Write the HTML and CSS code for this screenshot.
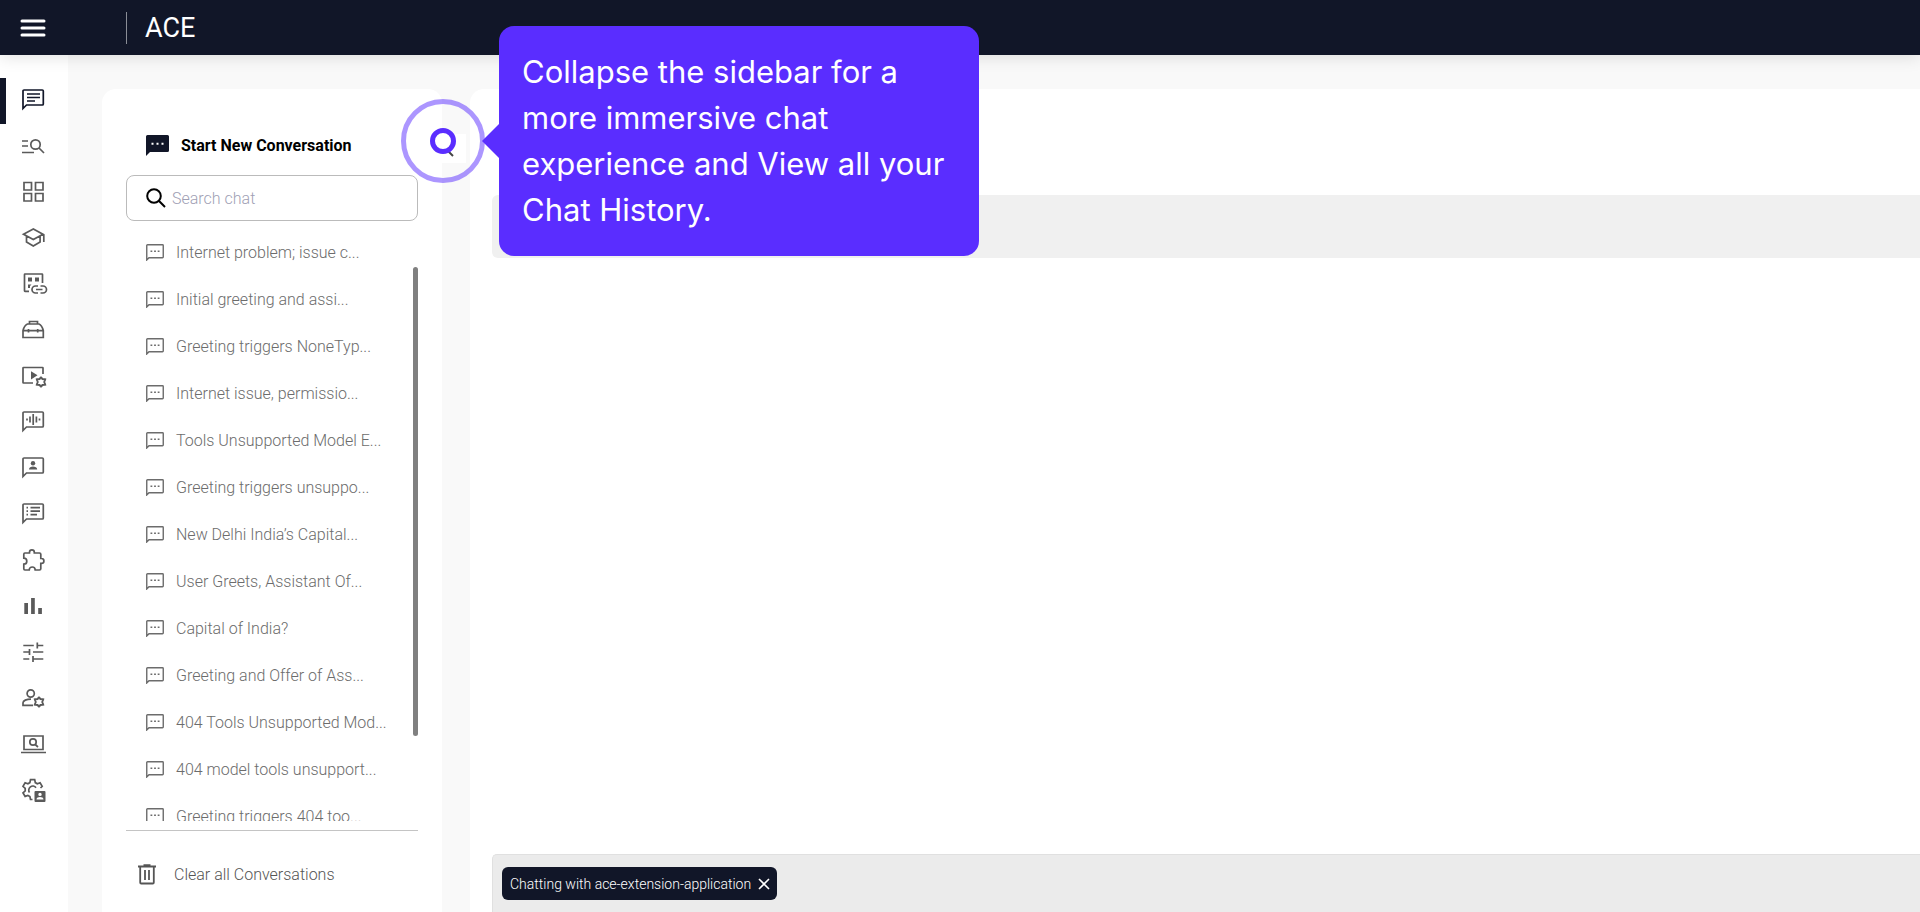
FILE: index.html
```html
<!DOCTYPE html>
<html lang="en">
<head>
    <meta charset="UTF-8">
    <meta name="viewport" content="width=device-width, initial-scale=1.0">
    <title>ACE</title>
    <link rel="stylesheet" href="styles.css">
</head>
<body>

<!-- shared icon shapes -->
<svg class="sprite" aria-hidden="true">
    <symbol id="bubble" viewBox="0 0 24 24">
        <path d="M2 20.5V3a1 1 0 0 1 1-1h18.300a1 1 0 0 1 1 1v13a1 1 0 0 1-1 1H5.500z"/>
    </symbol>
    <symbol id="gear" viewBox="0 0 24 24">
        <path d="M12 1l3 4.500 6.500.5-2.500 6 2.500 6-6.500.5-3 4.500-3-4.500-6.500-.5L5 12 2.500 6l6.500-.5z"/>
    </symbol>
    <symbol id="message" viewBox="0 0 18 17">
        <path d="M.75 16V1.500a.75.75 0 0 1 .75-.75h15a.75.75 0 0 1 .75.75v11.500a.75.75 0 0 1-.75.75H3z"/>
        <path d="M4.500 7.200h1.800M8.100 7.200h1.800M11.700 7.200h1.800"/>
    </symbol>
</svg>

<header class="topbar">
    <button class="menu-btn" aria-label="Menu">
        <svg width="26" height="18" viewBox="0 0 26 18"><path d="M2 2h22M2 9h22M2 16h22"/></svg>
    </button>
    <span class="topbar-divider"></span>
    <h1>ACE</h1>
</header>

<div class="layout">
    <nav class="rail" aria-label="Main">
        <a href="#" class="active" aria-label="Chat"><svg class="icon"><use href="#bubble"/><path d="M6 6h13M6 9.500h13M6 13h8"/></svg></a>
        <a href="#" aria-label="Search logs"><svg class="icon"><path d="M1 7h6M1 12h6M1 18.500h12M18 14l5 5"/><circle cx="14.500" cy="10.500" r="4.700"/></svg></a>
        <a href="#" aria-label="Dashboard"><svg class="icon"><path d="M3 2.500h7.500v7.500H3zM14.500 2.500H22v7.500h-7.500zM3 13.500h7.500V21H3zM14.500 13.500H22V21h-7.500z"/></svg></a>
        <a href="#" aria-label="Learning"><svg class="icon"><path d="M12.300 3L2.500 8.200l9.800 5.300L22 8.200zM5.500 10v6l6.800 4 6.800-4v-6M22.800 8.200V16"/></svg></a>
        <a href="#" aria-label="Integrations"><svg class="icon"><path d="M8 19.300H4a.5.5 0 0 1-.5-.5V2.500A.5.5 0 0 1 4 2h17a.5.5 0 0 1 .5.5V11"/><path class="solid" d="M7 5.500h4v4H7zM14 5.500h4v4h-4zM7 12.500h3.500L9 14v2H7z"/><path d="M17 14h-2.500a3.500 3.500 0 0 0 0 7H17M19.500 14H22a3.500 3.500 0 0 1 0 7h-2.500M15 17.500h6.500"/></svg></a>
        <a href="#" aria-label="Tools"><svg class="icon"><path d="M8.500 6V3.500h8V6M6.500 6h11.500c2.500 1 3.500 3.500 4.300 6.500v7H2v-7C2.800 9.500 4 7 6.500 6zM2 12.700h20.300M7.500 11v3.500M16.700 11v3.500"/></svg></a>
        <a href="#" aria-label="Video settings"><svg class="icon"><path d="M12 19H2.500A.5.5 0 0 1 2 18.500V4a.5.5 0 0 1 .5-.5h19a.5.5 0 0 1 .5.500V10"/><path class="solid" d="M10 7.200v8.300l6.500-4.200z"/><use class="small-gear" href="#gear" x="14.500" y="12.500" width="11" height="11"/></svg></a>
        <a href="#" aria-label="Voice chat"><svg class="icon"><use href="#bubble"/><path d="M6 8.500v2M9 6.500v6M12.200 4v11M15.400 6.500v6M18.500 8.500v2"/></svg></a>
        <a href="#" aria-label="Personas"><svg class="icon"><use href="#bubble"/><circle class="solid" cx="12" cy="7.300" r="2.200"/><path class="solid" d="M8 13.500c0-2.200 2-3 4-3s4.200.8 4.200 3z"/></svg></a>
        <a href="#" aria-label="Prompts"><svg class="icon"><use href="#bubble"/><path d="M5.500 5.700h1.500M9.500 5.700H19M5.500 9.200h1.500M9.500 9.200H19M5.500 12.700h1.500M9.500 12.700H16"/></svg></a>
        <a href="#" aria-label="Extensions"><svg class="icon"><path d="M4 5h4.500V4.200a2.400 2.400 0 0 1 4.800 0V5h5.200a1.300 1.300 0 0 1 1.300 1.300v4.200h.7a2.400 2.400 0 0 1 0 4.800h-.7v5.400a1.300 1.300 0 0 1-1.300 1.300h-4.300c0-1.800-1.400-3-3-3s-3 1.200-3 3H4A1.300 1.300 0 0 1 2.800 20.700V16.200c1.700 0 3-1.400 3-3s-1.300-3-3-3V6.300A1.300 1.300 0 0 1 4 5z"/></svg></a>
        <a href="#" aria-label="Analytics"><svg class="icon"><path class="solid" d="M3.300 9h3.700v11H3.300zM10.100 4h3.700v16h-3.700zM17.200 14h3.700v6h-3.700z"/></svg></a>
        <a href="#" aria-label="Tuning"><svg class="icon"><path d="M2.300 5.500h10.500M16.300 2.500v6M16.300 5.500h6M2.300 12h6M8.500 9v6M12 12h10.300M2.300 19h6M12 16v6M12 19h10.300"/></svg></a>
        <a href="#" aria-label="Accounts"><svg class="icon"><circle cx="9.700" cy="7.500" r="3.600"/><path d="M12 19.300H2v-2.500c0-2.200 3.500-3.700 8-3.700"/><use class="small-gear" href="#gear" x="12.500" y="10.500" width="11" height="11"/></svg></a>
        <a href="#" aria-label="Monitoring"><svg class="icon"><path d="M3 4h19v13.500H3zM0 20.500h25M14.200 12.500l2.800 2.500"/><circle cx="12" cy="10" r="3.200"/></svg></a>
        <a href="#" aria-label="Admin settings"><svg class="icon"><path d="M11.500 21.500h-2l-.6-3-2-1.100-2.800 1-2.100-3.600 2.200-2v-2.400l-2.200-2L4.100 4.800l2.800 1 2-1.200.6-3h4.200l.6 3 2 1.200 2.800-1L21.200 8.400 19.500 10"/><path d="M8.500 14.500a4 4 0 0 1 6.500-4.700"/><path class="solid" fill-rule="evenodd" d="M14.500 13h9a1 1 0 0 1 1 1v9a1 1 0 0 1-1 1h-9a1 1 0 0 1-1-1v-9a1 1 0 0 1 1-1zM19 14.700a1.700 1.700 0 1 0 0 3.400 1.700 1.700 0 0 0 0-3.400zM15.500 21.500h7c0-1.800-1.800-2.500-3.500-2.500s-3.500.7-3.500 2.500z"/></svg></a>
    </nav>

    <aside class="history">
        <button class="new-chat">
            <svg width="23" height="21" viewBox="0 0 23 21"><path d="M0 21V1.500A1.500 1.500 0 0 1 1.500 0h20A1.500 1.500 0 0 1 23 1.500v14a1.500 1.500 0 0 1-1.500 1.500H4z"/><path class="dots" d="M5.500 8.700h2M10.500 8.700h2M15.500 8.700h2"/></svg>
            Start New Conversation
        </button>

        <label class="search">
            <svg width="20" height="20" viewBox="0 0 20 20"><circle cx="8" cy="8" r="6.800"/><path d="M12.800 12.800l6.200 6.200"/></svg>
            <input type="search" placeholder="Search chat" aria-label="Search chat">
        </label>

        <div class="history-list">
            <ul id="conversations"></ul>
            <div class="scroll-track"><div class="scroll-thumb"></div></div>
        </div>

        <button class="clear-all">
            <svg width="18" height="21" viewBox="0 0 18 21"><path d="M0 2.500h18M5.500 1.200h7M2.200 2.500v16a1 1 0 0 0 1 1h11.600a1 1 0 0 0 1-1v-16M7 6v10M11 6v10"/></svg>
            Clear all Conversations
        </button>

        <button class="collapse-btn" aria-label="Collapse sidebar">
            <svg width="12" height="12" viewBox="0 0 12 12"><path d="M1 1l8 8"/></svg>
        </button>
    </aside>

    <main class="chat">
        <div class="chat-banner"></div>
        <div class="composer">
            <div class="chip">
                Chatting with ace-extension-application
                <button aria-label="Close"><svg width="12" height="12" viewBox="0 0 12 12"><path d="M1 1l10 10M11 1L1 11"/></svg></button>
            </div>
        </div>
    </main>
</div>

<!-- guided tour step -->
<div class="tour-marker"><span></span></div>
<div class="tour-tip" role="tooltip">Collapse the sidebar for a more immersive chat experience and View all your Chat History.</div>

<script>
    const conversations = [
        "Internet problem; issue c...",
        "Initial greeting and assi...",
        "Greeting triggers NoneTyp...",
        "Internet issue, permissio...",
        "Tools Unsupported Model E...",
        "Greeting triggers unsuppo...",
        "New Delhi India’s Capital...",
        "User Greets, Assistant Of...",
        "Capital of India?",
        "Greeting and Offer of Ass...",
        "404 Tools Unsupported Mod...",
        "404 model tools unsupport...",
        "Greeting triggers 404 too..."
    ];

    function loadConversations() {
        let list = document.querySelector("#conversations");

        conversations.forEach(title => {
            let item = document.createElement("li");
            item.innerHTML = '<a href="#"><svg width="18" height="17"><use href="#message"/></svg><span></span></a>';
            item.querySelector("span").textContent = title;
            list.appendChild(item);
        });
    }

    loadConversations();
</script>

</body>
</html>
```
FILE: styles.css
```css
* { box-sizing: border-box; }
body { margin: 0; height: 100vh; display: flex; flex-direction: column; overflow: hidden; background: #f9f9f9; font-family: Roboto, Arial, sans-serif; font-size: 16px; }
button { padding: 0; border: none; background: none; font: inherit; cursor: pointer; }
a { color: inherit; text-decoration: none; }
svg { display: block; flex: none; fill: none; overflow: visible; }
.sprite { position: absolute; width: 0; height: 0; }

/* top bar */
.topbar { position: relative; flex: none; height: 55px; padding-left: 20px; display: flex; align-items: center; background: #111628; color: white; box-shadow: 0 2px 16px rgba(0, 0, 0, 0.12); }
.menu-btn svg { stroke: white; stroke-width: 3; stroke-linecap: round; }
.topbar-divider { width: 1px; height: 32px; margin: 0 18px 0 80px; background: #8a8d96; }
.topbar h1 { margin: 0; font-size: 27px; font-weight: 400; }

.layout { flex: 1; min-height: 0; display: flex; }

/* icon rail */
.rail { flex: none; width: 68px; padding-top: 23px; background: white; color: #5a5a5a; }
.rail a { display: flex; align-items: center; height: 46px; padding: 0 0 2px 15px; border-left: 6px solid transparent; }
.rail a.active { border-left-color: #111628; color: #111628; }
.icon { width: 24px; height: 24px; stroke: currentColor; stroke-width: 1.7; }
.icon .solid { fill: currentColor; stroke: none; }
.icon .small-gear { stroke-width: 4; }

/* chat history */
.history { position: relative; flex: none; width: 340px; margin: 34px 0 0 34px; padding: 44px 24px 0; display: flex; flex-direction: column; background: white; border-radius: 14px 14px 0 0; color: #6c6c6c; }
.new-chat { display: flex; align-items: center; gap: 12px; height: 24px; padding-left: 20px; font-weight: 700; color: black; }
.new-chat svg { fill: #111628; }
.new-chat .dots { stroke: white; stroke-width: 2; }
.search { flex: none; display: flex; align-items: center; gap: 6px; height: 46px; margin-top: 18px; padding-left: 19px; border: 1px solid #bbb; border-radius: 8px; }
.search svg { stroke: black; stroke-width: 2; }
.search input { flex: 1; min-width: 0; padding: 0; border: none; outline: none; background: none; font: inherit; font-weight: 300; }
.search input::placeholder { color: #a0a0b4; }
.history-list { flex: 1; min-height: 0; display: flex; margin-top: 8px; overflow: hidden; }
.history-list ul { flex: 1; margin: 0; padding: 0; list-style: none; }
.history-list a { display: flex; align-items: center; gap: 12px; height: 47px; padding-left: 20px; font-weight: 300; }
.history-list svg { stroke: #6c6c6c; stroke-width: 1.4; }
.scroll-track { width: 5px; padding: 38px 0 85px; }
.scroll-thumb { height: 100%; border-radius: 3px; background: #808080; }
.clear-all { flex: none; display: flex; align-items: center; gap: 18px; height: 82px; margin-top: 9px; padding: 6px 0 0 12px; border-top: 1px solid #c4c4c4; font-weight: 300; color: #555; }
.clear-all svg { stroke: #555; stroke-width: 1.8; }
.collapse-btn { position: absolute; left: 100%; top: 45px; width: 24px; height: 29px; padding: 9px 0 0 2px; background: white; }
.collapse-btn svg { stroke: #444; stroke-width: 2; }

/* chat area */
.chat { flex: 1; min-width: 0; margin: 34px 0 0 28px; padding: 106px 0 0 22px; display: flex; flex-direction: column; justify-content: space-between; background: white; border-radius: 14px 0 0 0; }
.chat-banner { height: 63px; background: #f0f0f0; border-radius: 6px 0 0 6px; }
.composer { height: 58px; padding: 12px 9px; border: 1px solid #e0e0e0; border-width: 1px 0 0 1px; border-radius: 5px 0 0 0; background: #ebebeb; }
.chip { display: inline-flex; align-items: center; gap: 7px; height: 33px; padding: 0 7px 0 8px; border-radius: 6px; background: #111628; color: white; font-size: 14px; font-weight: 300; }
.chip svg { stroke: white; stroke-width: 1.6; }

/* guided tour */
.tour-marker { position: absolute; left: 401px; top: 99px; width: 84px; height: 84px; display: flex; align-items: center; justify-content: center; border: 5px solid rgba(90, 45, 255, 0.5); border-radius: 50%; }
.tour-marker span { width: 26px; height: 26px; border: 5px solid #5a2dff; border-radius: 50%; background: white; }
.tour-tip { position: absolute; left: 499px; top: 26px; width: 480px; padding: 23px; border-radius: 15px; background: #5a2dff; color: white; font-family: Inter, sans-serif; font-size: 31px; line-height: 46px; }
.tour-tip::before { content: ""; position: absolute; right: 100%; top: 98px; border: 17px solid transparent; border-left: none; border-right-color: #5a2dff; }
```
